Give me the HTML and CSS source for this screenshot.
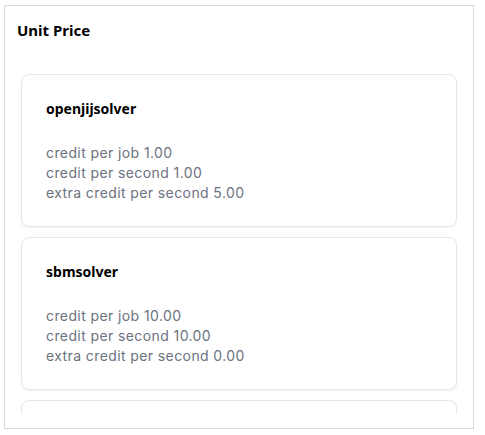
FILE: index.html
```html
<!DOCTYPE html>
<html lang="en">
<head>
<meta charset="utf-8">
<title>Unit Price</title>
<link rel="stylesheet" href="styles.css">
</head>
<body>
<section class="panel">
  <h2 class="panel-title">Unit Price</h2>
  <div class="list">
    <div class="card">
      <h3 class="card-title">openjijsolver</h3>
      <div class="card-body">
        <p>credit per job 1.00</p>
        <p>credit per second 1.00</p>
        <p>extra credit per second 5.00</p>
      </div>
    </div>
    <div class="card">
      <h3 class="card-title">sbmsolver</h3>
      <div class="card-body">
        <p>credit per job 10.00</p>
        <p>credit per second 10.00</p>
        <p>extra credit per second 0.00</p>
      </div>
    </div>
    <div class="card card-stub"></div>
  </div>
</section>
</body>
</html>
```
FILE: styles.css
```css
* { box-sizing: border-box; }
html, body { margin: 0; padding: 0; background: #ffffff; }
body {
  font-family: "Noto Sans", "Noto Sans CJK JP", sans-serif;
  color: #111827;
  padding: 5px 0 0 4px;
}
.panel {
  width: 470px;
  height: 424px;
  border: 1px solid #d3dae4;
  padding: 12px 12px 14px;
  display: flex;
  flex-direction: column;
}
.panel-title {
  margin: 0;
  font-size: 15px;
  line-height: 24px;
  font-weight: 700;
  color: #000;
}
.list {
  margin-top: 16px;
  flex: 1;
  overflow: hidden;
  padding: 16px 4px;
  display: flex;
  flex-direction: column;
  gap: 10px;
}
.card {
  flex-shrink: 0;
  border: 1px solid #e5e7eb;
  border-radius: 8px;
  box-shadow: 0 1px 2px rgba(0, 0, 0, 0.06);
  padding: 24px 24px 23px;
  background: #fff;
}
.card-stub {
  height: 152px;
}
.card-title {
  margin: 0 0 24px;
  font-size: 14px;
  line-height: 20px;
  font-weight: 700;
  color: #000;
}
.card-body p {
  margin: 0;
  font-family: "Inter", "Noto Sans", sans-serif;
  font-size: 14px;
  letter-spacing: 0.4px;
  line-height: 20px;
  color: #6b7280;
}
```
